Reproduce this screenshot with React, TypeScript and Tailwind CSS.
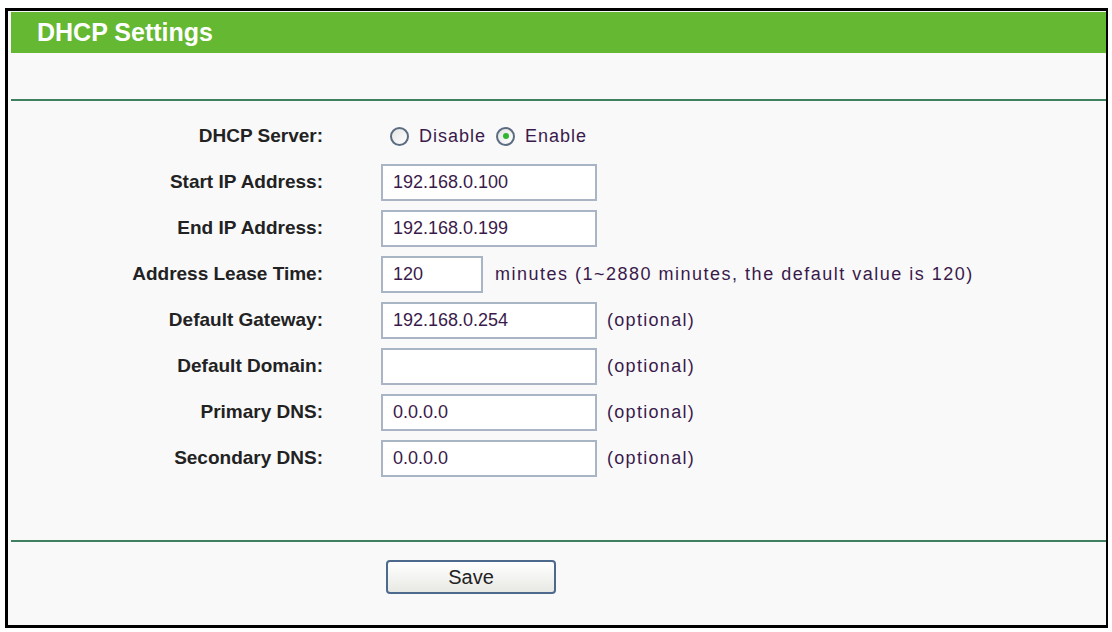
const font = { fontFamily: '"Liberation Sans", Arial, sans-serif' };

function Row({ label, children }: { label: string; children: React.ReactNode }) {
  return (
    <div className="flex h-[46px] items-center">
      <div className="w-[312px] text-right text-[19px] font-bold text-[#222]">{label}</div>
      <div className="ml-[58px] flex items-center">{children}</div>
    </div>
  );
}

function Field({ value, w = 'w-[216px]' }: { value: string; w?: string }) {
  return (
    <div className={`${w} flex h-[37px] items-center border-2 border-[#a9b4c4] bg-white px-[10px] text-[18px] text-[#3a1a4a]`}>
      {value}
    </div>
  );
}

function Radio({ checked }: { checked?: boolean }) {
  return (
    <span className="flex h-[19px] w-[19px] items-center justify-center rounded-full border-2 border-[#5b6c80] bg-gradient-to-br from-[#e4e4e4] to-white">
      {checked && <span className="h-[6px] w-[6px] rounded-full bg-[#2fb52f]" />}
    </span>
  );
}

const Opt = () => <span className="ml-[10px] text-[18px] tracking-[1.3px] text-[#3a1a4a]">(optional)</span>;

export default function App() {
  return (
    <div className="h-[632px] w-[1112px] bg-white pl-[5px] pt-[8px]" style={font}>
      <div className="h-[620px] w-[1103px] border-[3px] border-r-2 border-black bg-[#f9f9fa] pl-[3px] pt-[1px]">
        <div className="flex h-[41px] items-center bg-[#65b831] pl-[26px] text-[25px] font-bold text-white">
          DHCP Settings
        </div>
        <div className="h-[46px]" />
        <div className="h-[2px] bg-[#3f8060]" />
        <div className="pt-[12px]">
          <Row label="DHCP Server:">
            <div className="flex items-center gap-[10px] pl-[9px] text-[18px] tracking-[1px] text-[#3a1a4a]">
              <Radio />
              <span>Disable</span>
              <Radio checked />
              <span>Enable</span>
            </div>
          </Row>
          <Row label="Start IP Address:"><Field value="192.168.0.100" /></Row>
          <Row label="End IP Address:"><Field value="192.168.0.199" /></Row>
          <Row label="Address Lease Time:">
            <Field value="120" w="w-[102px]" />
            <span className="ml-[12px] text-[18px] tracking-[1.5px] text-[#3a1a4a]">minutes (1~2880 minutes, the default value is 120)</span>
          </Row>
          <Row label="Default Gateway:"><Field value="192.168.0.254" /><Opt /></Row>
          <Row label="Default Domain:"><Field value="" /><Opt /></Row>
          <Row label="Primary DNS:"><Field value="0.0.0.0" /><Opt /></Row>
          <Row label="Secondary DNS:"><Field value="0.0.0.0" /><Opt /></Row>
        </div>
        <div className="mt-[59px] h-[2px] bg-[#3f8060]" />
        <div className="pl-[375px] pt-[18px]">
          <button className="h-[34px] w-[170px] rounded-[4px] border-2 border-[#4d6a8c] bg-gradient-to-b from-white to-[#e8e8e4] text-[20px] text-[#222]">
            Save
          </button>
        </div>
      </div>
    </div>
  );
}
